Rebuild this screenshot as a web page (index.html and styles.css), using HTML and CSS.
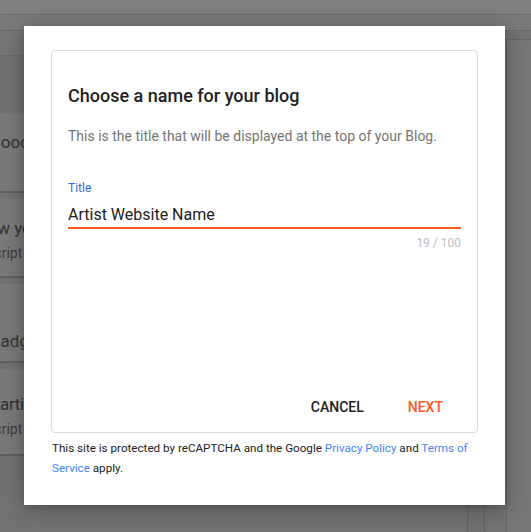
FILE: index.html
```html
<!DOCTYPE html>
<html>
<head>
<meta charset="utf-8">
<link rel="stylesheet" href="styles.css">
</head>
<body>
<div class="page">
  <div class="topbar"></div>
  <div class="subbar"></div>
  <div class="main">
    <div class="left">
      <div class="strip"></div>
      <div class="cards">
        <div class="card c1"><div class="ctitle">Mood</div></div>
        <div class="card c2"><div class="ctitle">Show yo</div><div class="csub">Script</div></div>
        <div class="card c3"><div class="ctitle">Badge</div></div>
        <div class="card c4"><div class="ctitle">artist</div><div class="csub">Script</div></div>
      </div>
    </div>
    <div class="mid"></div>
    <div class="right"><div class="panel"></div></div>
  </div>
</div>

<div class="modal">
  <div class="box">
    <h1 class="heading">Choose a name for your blog</h1>
    <p class="desc">This is the title that will be displayed at the top of your Blog.</p>
    <div class="field">
      <div class="label">Title</div>
      <div class="input">Artist Website Name</div>
      <div class="counter">19 / 100</div>
    </div>
    <div class="actions">
      <button class="btn cancel">CANCEL</button>
      <button class="btn next">NEXT</button>
    </div>
  </div>
  <p class="legal">This site is protected by reCAPTCHA and the Google <a href="#">Privacy Policy</a> and <a href="#">Terms of Service</a> apply.</p>
</div>
</body>
</html>
```

FILE: styles.css
```css
html, body {
  margin: 0;
  padding: 0;
}
body {
  width: 531px;
  height: 532px;
  overflow: hidden;
  background: #737373;
  font-family: Roboto, "Noto Sans", sans-serif;
}
.page {
  display: flex;
  flex-direction: column;
  height: 532px;
}
.topbar {
  height: 14px;
  background: #808080;
  border-bottom: 1px solid #6c6c6c;
}
.subbar {
  height: 15px;
  background: #7a7a7a;
  border-bottom: 1px solid #6a6a6a;
}
.main {
  flex: 1;
  display: flex;
}
.left {
  width: 467px;
  display: flex;
  flex-direction: column;
}
.strip {
  height: 24px;
  background: #767676;
  border-bottom: 1px solid #6b6b6b;
}
.cards {
  display: flex;
  flex-direction: column;
  gap: 6px;
  padding-top: 57px;
}
.card {
  background: #7a7a7a;
  border-bottom: 2px solid #5f5f5f;
  box-sizing: border-box;
  overflow: hidden;
}
.c1 { height: 80px; padding-top: 17px; }
.c2 { height: 79px; padding-top: 17px; }
.c3 { height: 79px; padding-top: 45px; }
.c4 { height: 87px; padding-top: 23px; }
.ctitle {
  font-size: 17px;
  line-height: 24px;
  color: #333;
  white-space: nowrap;
  margin-left: -14px;
}
.c2 .ctitle { margin-left: -32px; }
.c3 .ctitle { margin-left: -10px; }
.c4 .ctitle { margin-left: 0; letter-spacing: -0.3px; }
.csub {
  font-size: 14px;
  line-height: 26px;
  color: #3d3d3d;
  white-space: nowrap;
  margin-left: -14px;
}
.mid {
  width: 16px;
  border-left: 1px solid #646464;
  border-right: 1px solid #646464;
  background: #717171;
}
.right {
  flex: 1;
  display: flex;
  flex-direction: column;
  padding-top: 8px;
}
.panel {
  flex: 1;
  margin-left: 21px;
  border-left: 1px solid #666;
  border-top: 1px solid #666;
  background: #777;
}

.modal {
  position: absolute;
  left: 24px;
  top: 26px;
  width: 481px;
  height: 479px;
  box-sizing: border-box;
  background: #fff;
  padding: 24px 27px 0 27px;
  box-shadow: 0 4px 24px rgba(0,0,0,0.28), 0 2px 6px rgba(0,0,0,0.15);
}
.box {
  height: 383px;
  box-sizing: border-box;
  border: 1px solid #d5dde2;
  border-radius: 4px;
  padding: 33px 16px 7px 16px;
  display: flex;
  flex-direction: column;
}
.heading {
  margin: 0;
  font-size: 18px;
  line-height: 24px;
  font-weight: 500;
  color: #212121;
}
.desc {
  margin: 18px 0 0;
  font-size: 14px;
  line-height: 20px;
  color: #757575;
}
.field {
  margin-top: 34px;
  display: flex;
  flex-direction: column;
}
.label {
  font-size: 12px;
  line-height: 16px;
  color: #3367d6;
}
.input {
  margin-top: 9px;
  font-size: 16px;
  line-height: 20px;
  color: #212121;
  padding-bottom: 2px;
  border-bottom: 2px solid #ff5722;
}
.counter {
  margin-top: 6px;
  text-align: right;
  font-size: 12px;
  line-height: 16px;
  color: #bdbdbd;
}
.actions {
  margin-top: auto;
  display: flex;
  justify-content: flex-end;
  gap: 12px;
  padding-right: 2px;
}
.btn {
  font-family: Roboto, "Noto Sans", sans-serif;
  border: none;
  background: transparent;
  height: 36px;
  padding: 0 16px;
  font-size: 14px;
  font-weight: 500;
  cursor: pointer;
}
.cancel { color: #212121; }
.next { color: #ff5722; }
.legal {
  margin: 5px 0 0 1px;
  font-size: 11.65px;
  line-height: 20px;
  color: #212121;
}
.legal a {
  color: #4285f4;
  text-decoration: none;
}
```
